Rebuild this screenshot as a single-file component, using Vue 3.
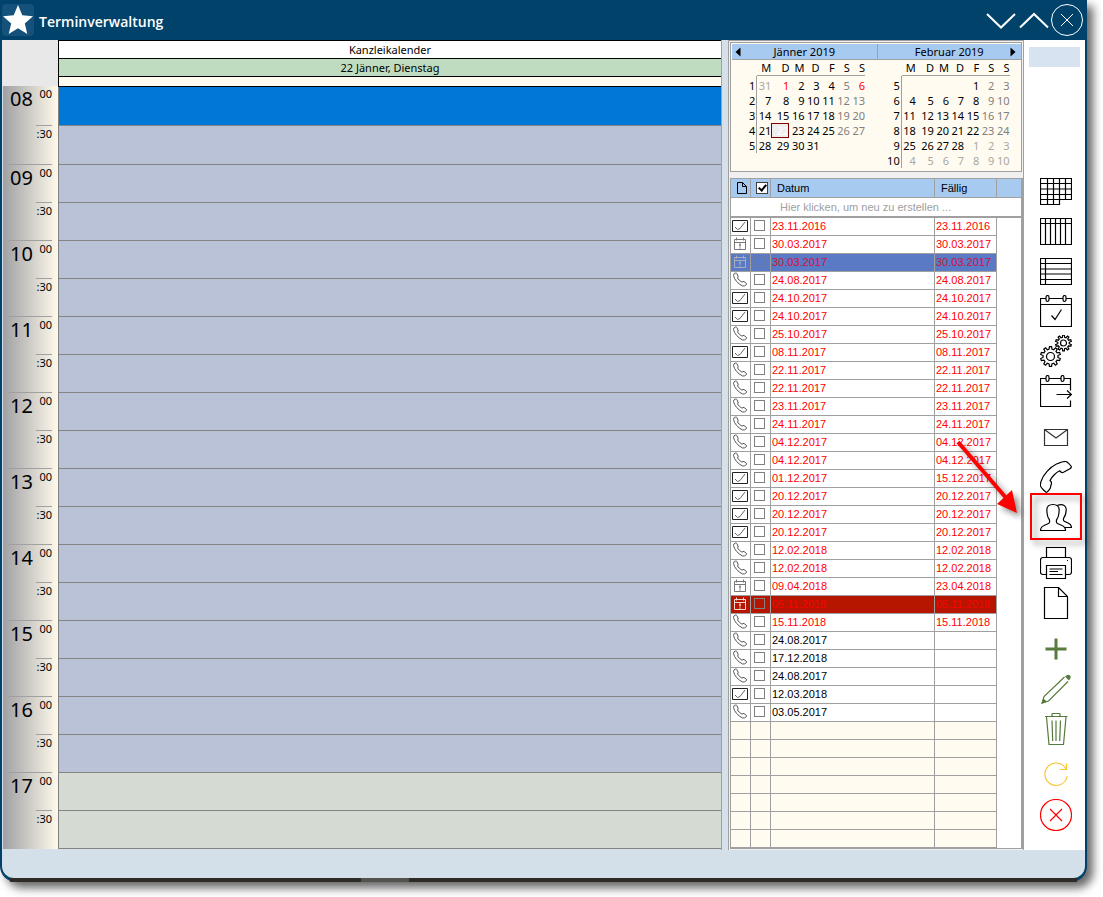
<script setup>
import { ref } from 'vue'

const hours = ['08', '09', '10', '11', '12', '13', '14', '15', '16', '17']

const selectedSlot = ref('08:00')
const slots = hours.flatMap((h) => [`${h}:00`, `${h}:30`])

const weekdays = ['M', 'D', 'M', 'D', 'F', 'S', 'S']

// n: normal, o: outside the month, r: holiday, s: selected; weekends are grey by column
const months = [
  {
    name: 'Jänner 2019',
    weeks: [
      { no: 1, days: ['31o', '1r', '2', '3', '4', '5', '6r'] },
      { no: 2, days: ['7', '8', '9', '10', '11', '12', '13'] },
      { no: 3, days: ['14', '15', '16', '17', '18', '19', '20'] },
      { no: 4, days: ['21', '22s', '23', '24', '25', '26', '27'] },
      { no: 5, days: ['28', '29', '30', '31', '', '', ''] }
    ]
  },
  {
    name: 'Februar 2019',
    weeks: [
      { no: 5, days: ['', '', '', '', '1', '2', '3'] },
      { no: 6, days: ['4', '5', '6', '7', '8', '9', '10'] },
      { no: 7, days: ['11', '12', '13', '14', '15', '16', '17'] },
      { no: 8, days: ['18', '19', '20', '21', '22', '23', '24'] },
      { no: 9, days: ['25', '26', '27', '28', '1o', '2o', '3o'] },
      { no: 10, days: ['4o', '5o', '6o', '7o', '8o', '9o', '10o'] }
    ]
  }
]

function dayClass(day, index) {
  return {
    weekend: index > 4,
    outside: day.endsWith('o'),
    holiday: day.endsWith('r'),
    today: day.endsWith('s')
  }
}

const task = (kind, date, due = '', state = '') => ({ kind, date, due, state, done: false })
const tasks = ref([
  task('check', '23.11.2016', '23.11.2016'),
  task('date', '30.03.2017', '30.03.2017'),
  task('date', '30.03.2017', '30.03.2017', 'active'),
  task('phone', '24.08.2017', '24.08.2017'),
  task('check', '24.10.2017', '24.10.2017'),
  task('check', '24.10.2017', '24.10.2017'),
  task('phone', '25.10.2017', '25.10.2017'),
  task('check', '08.11.2017', '08.11.2017'),
  task('phone', '22.11.2017', '22.11.2017'),
  task('phone', '22.11.2017', '22.11.2017'),
  task('phone', '23.11.2017', '23.11.2017'),
  task('phone', '24.11.2017', '24.11.2017'),
  task('phone', '04.12.2017', '04.12.2017'),
  task('phone', '04.12.2017', '04.12.2017'),
  task('check', '01.12.2017', '15.12.2017'),
  task('check', '20.12.2017', '20.12.2017'),
  task('check', '20.12.2017', '20.12.2017'),
  task('check', '20.12.2017', '20.12.2017'),
  task('phone', '12.02.2018', '12.02.2018'),
  task('phone', '12.02.2018', '12.02.2018'),
  task('date', '09.04.2018', '23.04.2018'),
  task('date', '05.11.2018', '05.11.2018', 'urgent'),
  task('phone', '15.11.2018', '15.11.2018'),
  task('phone', '24.08.2017'),
  task('phone', '17.12.2018'),
  task('phone', '24.08.2017'),
  task('check', '12.03.2018'),
  task('phone', '03.05.2017')
])
const allDone = ref(true)

function gear(cx, cy, outer, inner, teeth, hole) {
  const step = (Math.PI * 2) / teeth
  const pt = (r, a) => `${(cx + r * Math.cos(a)).toFixed(2)} ${(cy + r * Math.sin(a)).toFixed(2)}`
  let d = ''
  for (let i = 0; i < teeth; i++) {
    const a = i * step - Math.PI / 2
    d += `${i ? 'L' : 'M'}${pt(inner, a - step * 0.3)}L${pt(outer, a - step * 0.17)}L${pt(outer, a + step * 0.17)}L${pt(inner, a + step * 0.3)}`
  }
  return `${d}ZM${cx - hole} ${cy}a${hole} ${hole} 0 1 0 ${hole * 2} 0a${hole} ${hole} 0 1 0 ${-hole * 2} 0`
}

const rings = (a, b) =>
  [a, b].map((x) => `M${x - 1.5} 2.5a1.5 2 0 0 1 3 0v2a1.5 2 0 0 1 -3 0z`).join('')

const toolGroups = [
  [
    { label: 'Monatsansicht', d: 'M.5 3.5H31.5V24.5H19.5V29.5H.5ZM7.5 3.5V29.5M13.5 3.5V29.5M19.5 3.5V24.5M25.5 3.5V24.5M.5 8.5H31.5M.5 14H31.5M.5 19.5H31.5M.5 24.5H19.5' },
    { label: 'Wochenansicht', d: 'M.5 3.5H31.5V29.5H.5ZM.5 8.5H31.5M5.5 3.5V29.5M10.5 3.5V29.5M15.5 3.5V29.5M20.5 3.5V29.5M25.5 3.5V29.5' },
    { label: 'Tagesansicht', d: 'M.5 3.5H31.5V29.5H.5ZM5.5 3.5V29.5M.5 8.5H31.5M.5 14H31.5M.5 19H31.5M.5 24.5H31.5' },
    { label: 'Heute', d: 'M6 3.5H.5V31.5H31.5V3.5H26M9 3.5H23M.5 9.5H31.5M11.5 20.5L15 24.5L21.5 14.5' + rings(7.5, 24.5) },
    { label: 'Einstellungen', d: gear(10.5, 21.5, 10, 7.5, 10, 4) + gear(23.5, 8, 8, 5.8, 10, 3) },
    { label: 'Termin verschieben', d: 'M6 3.5H.5V31.5H30.5V25.5M9 3.5H21M24 3.5H30.5V15.5M.5 9.5H30.5M16.5 19.5H31M27 15.5L31.5 19.5L27 23.5' + rings(7.5, 22.5) }
  ],
  [
    { label: 'E-Mail', d: 'M4.5 8.5H27.5V24.5H4.5ZM4.5 8.5L16 17L27.5 8.5', soft: true },
    { label: 'Telefonat', d: 'M26 .5C27.5 1 30.5 4 31.3 5.5C31.5 6.5 31 7.3 29.5 8L23.5 11.3C22 12 21 11.5 19.8 9.8C16 11.5 11.5 16 10 19.5C11.5 20.5 11.8 21.5 11.3 23L10.3 27C9.8 28.5 7.5 31 6.5 31.3C5.5 31.5 1.5 27 .7 25.5C.3 24.5 .5 22 1 20.5C3 14 10 6 16.5 3C19 2 24 .3 26 .5Z' },
    { label: 'Personen', marked: true, d: 'M.5 29.5C.5 26.5 1.5 25.5 4 24.5L8.5 22.5C9.8 21.8 9.8 20 9.3 18.5C7.5 16.5 7 13.5 6.8 9C6.8 5 9 3.5 13 3.5C17 3.5 19.2 5 19.2 9C19 13.5 18.5 16.5 16.7 18.5C16.2 20 16.2 21.8 17.5 22.5L22 24.5C24.5 25.5 25.5 26.5 25.5 29.5ZM17.5 4.3C22.5 2.3 26.5 4.5 26.2 9C26 12.5 25.3 15 23.8 16.8C23.3 18 23.3 19.5 24.3 20.3L28.5 22.3C31 23.5 31.5 24.5 31.5 26.5H25' }
  ],
  [
    { label: 'Drucken', d: 'M6.5 10.5V.5H25.5V10.5M6.5 27.5H3Q.5 27.5 .5 25V13Q.5 10.5 3 10.5H29Q31.5 10.5 31.5 13V25Q31.5 27.5 29 27.5H25.5M6.5 18.5H25.5V31.5H6.5ZM9.5 22H22.5M9.5 24.5H18M9.5 27.5H22.5M27 13.5h1' },
    { label: 'Dokument', d: 'M4.5 .5H18.5L27.5 9.5V31.5H4.5ZM18.5 .5V9.5H27.5' }
  ],
  [
    { label: 'Neu', tone: 'green', d: '', fill: 'M14.5 5.5H17.5V14.5H26.5V17.5H17.5V26.5H14.5V17.5H5.5V14.5H14.5Z' },
    { label: 'Bearbeiten', tone: 'green', d: 'M24.5 4L4 23.5L2 30L8.5 28L28 8.5', fill: 'M25 3.5Q28 .5 30 2.5Q31.8 4.5 28.8 7.5ZM3.5 25.5L1.5 30.7L7 28.7Z' },
    { label: 'Löschen', tone: 'green', d: 'M5 3.5H27.5M12 3V1.5Q12 .5 13 .5H19Q20 .5 20 1.5V3M6.5 4L9 31.5H23.5L26 4M12 7.5L12.7 28M16 7.5V28M20.5 7.5L19.7 28' }
  ],
  [
    { label: 'Aktualisieren', tone: 'yellow', d: 'M26.5 4.5V10.5H20M26.3 10.5A11.2 11.2 0 1 0 27.2 17' },
    { label: 'Schließen', tone: 'red', d: 'M.5 16a15.5 15.5 0 1 0 31 0a15.5 15.5 0 1 0 -31 0M10 10L22 22M22 10L10 22' }
  ]
]
</script>

<template>
  <div class="window">
    <header class="titlebar">
      <span class="logo">
        <svg viewBox="0 0 32 32" width="32" height="32" aria-hidden="true">
          <path fill="#fff" d="M16 1L20.3 11.3L31 12.3L22.8 19.6L25.3 30L16 24.2L6.700 30L9.200 19.600L1 12.300L11.700 11.300Z" />
        </svg>
      </span>
      <h1>Terminverwaltung</h1>
      <button class="win-btn" type="button" aria-label="Minimieren">
        <svg viewBox="0 0 32 32" width="32" height="32"><path d="M2 10L16 23.500L30 10" /></svg>
      </button>
      <button class="win-btn" type="button" aria-label="Maximieren">
        <svg viewBox="0 0 32 32" width="32" height="32"><path d="M2 23.500L16 10L30 23.500" /></svg>
      </button>
      <button class="win-btn thin" type="button" aria-label="Fenster schließen">
        <svg viewBox="0 0 32 32" width="32" height="32"><path d="M.5 16a15.500 15.500 0 1 0 31 0a15.500 15.500 0 1 0 -31 0M10 10L22 22M22 10L10 22" /></svg>
      </button>
    </header>

    <main class="body">
      <section class="planner">
        <div class="ruler">
          <div class="ruler-head"></div>
          <div class="ruler-hours">
            <div v-for="(h, i) in hours" :key="h" class="hour" :class="{ first: i === 0 }">
              <span class="hour-no">{{ h }}</span>
              <div class="minutes">
                <span class="full">00</span>
                <span class="half">:30</span>
              </div>
            </div>
          </div>
        </div>
        <div class="day">
          <div class="day-title">Kanzleikalender</div>
          <div class="day-date">22 Jänner, Dienstag</div>
          <div class="day-allday"></div>
          <div class="slots">
            <button
              v-for="(s, i) in slots"
              :key="s"
              type="button"
              class="slot"
              :class="{ first: i < 2, selected: s === selectedSlot, off: i > 17 }"
              :aria-label="s"
              @click="selectedSlot = s"
            ></button>
          </div>
        </div>
      </section>

      <aside class="side">
        <div class="months">
          <div v-for="(m, mi) in months" :key="m.name" class="month">
            <div class="month-head">
              <button v-if="mi === 0" type="button" class="nav prev" aria-label="Voriger Monat">
                <svg viewBox="0 0 6 10" width="6" height="10"><path d="M5.500 .5V9.500L.5 5Z" /></svg>
              </button>
              <span>{{ m.name }}</span>
              <button v-if="mi === 1" type="button" class="nav next" aria-label="Nächster Monat">
                <svg viewBox="0 0 6 10" width="6" height="10"><path d="M.5 .5V9.500L5.500 5Z" /></svg>
              </button>
            </div>
            <table class="month-grid">
              <colgroup>
                <col class="c-week" /><col class="c-mon" /><col class="c-tue" />
                <col v-for="n in 5" :key="n" class="c-day" />
              </colgroup>
              <thead>
                <tr>
                  <td></td>
                  <th v-for="(w, i) in weekdays" :key="i" scope="col">{{ w }}</th>
                </tr>
              </thead>
              <tbody>
                <tr v-for="w in m.weeks" :key="w.no">
                  <th scope="row">{{ w.no }}</th>
                  <td v-for="(d, i) in w.days" :key="i" :class="dayClass(d, i)">{{ parseInt(d) || '' }}</td>
                </tr>
              </tbody>
            </table>
          </div>
        </div>

        <div class="tasks">
          <table class="task-grid">
            <colgroup>
              <col class="t-icon" /><col class="t-icon" /><col /><col class="t-due" /><col class="t-rest" />
            </colgroup>
            <thead>
              <tr class="task-head">
                <th scope="col" aria-label="Art">
                  <svg viewBox="0 0 11 13" width="11" height="13"><path fill="none" stroke="#000" d="M1.500 .5H6.500L10.500 4.500V11.500H1.500ZM6.500 .5V4.500H10.500" /></svg>
                </th>
                <th scope="col"><input v-model="allDone" type="checkbox" class="head-box" aria-label="Alle erledigt" /></th>
                <th scope="col" class="text">Datum</th>
                <th scope="col" class="text">Fällig</th>
                <th scope="col" aria-label="Leer"></th>
              </tr>
              <tr class="task-new">
                <td colspan="5"><button type="button">Hier klicken, um neu zu erstellen ...</button></td>
              </tr>
            </thead>
            <tbody>
              <tr v-for="(t, i) in tasks" :key="i" :class="[t.state, { overdue: t.due }]">
                <td class="icon">
                  <svg v-if="t.kind === 'check'" viewBox="0 0 17 15" width="17" height="15">
                    <path d="M.5 1.500H15.500V12.500H.5Z" stroke="#222" />
                    <path d="M3 8L5.500 10.500L8 9.500L13 3" stroke="#666" />
                  </svg>
                  <svg v-else-if="t.kind === 'date'" class="date-icon" viewBox="0 0 17 15" width="17" height="15">
                    <path d="M2.500 2.500H13.500V12.500H2.500ZM2.500 5.500H13.500M4.500 .5V3.500M11.500 .5V3.500" />
                    <path d="M8 6.500V9.500M8 10.500V11.500" stroke-width="1.500" />
                  </svg>
                  <svg v-else viewBox="0 0 17 17" width="17" height="17">
                    <path stroke="#555" d="M3.500 1Q1.500 1.500 1.500 3.500Q3 10 10.500 14Q12.500 14.500 14.500 12.500Q15 11.500 14 11L12 9.500Q11 9.200 10 10.200Q7 8.500 5.500 6Q6.500 5 6 4L5 1.700Q4.500 1 3.500 1Z" />
                  </svg>
                </td>
                <td class="pick"><input v-model="t.done" type="checkbox" :aria-label="`Erledigt ${t.date}`" /></td>
                <td class="text">{{ t.date }}</td>
                <td class="text">{{ t.due }}</td>
                <td class="rest"></td>
              </tr>
              <tr v-for="n in 7" :key="`e${n}`" class="empty">
                <td></td><td></td><td></td><td></td><td class="rest"></td>
              </tr>
            </tbody>
          </table>
        </div>
      </aside>

      <nav class="toolbar" aria-label="Werkzeuge">
        <div class="toolbar-field"></div>
        <div v-for="(g, gi) in toolGroups" :key="gi" class="tool-group">
          <button v-for="t in g" :key="t.label" type="button" class="tool" :class="[t.tone, { soft: t.soft }]" :aria-label="t.label">
            <svg viewBox="0 0 32 32" width="32" height="32">
              <path class="line" :d="t.d" />
              <path v-if="t.fill" class="solid" :d="t.fill" />
            </svg>
            <template v-if="t.marked">
              <span class="marker"></span>
              <svg class="pointer" viewBox="0 0 80 90" width="80" height="90">
                <path d="M9 7L58 64" stroke="#f00" stroke-width="4" />
                <path d="M68 78L48 69L63 55Z" fill="#f00" />
              </svg>
            </template>
          </button>
        </div>
      </nav>
    </main>

    <footer class="statusbar"></footer>
    <div class="edge"><span></span></div>
  </div>
</template>

<style>
body {
  background: #fff;
}
#app {
  padding-right: 16px;
  overflow: hidden;
  padding-bottom: 16px;
}
</style>

<style scoped>
.window {
  --line: #a0a0a0;
  background: #004269;
  border: 0 solid #004269;
  border-width: 0 2px;
  border-radius: 0 0 16px 16px;
  box-shadow: 6px 6px 10px rgba(0, 0, 0, 0.6);
  font: 11px/15px "Noto Sans", "DejaVu Sans Condensed", sans-serif;
  color: #000;
}
button {
  margin: 0;
  padding: 0;
  border: 0;
  background: none;
  font: inherit;
  color: inherit;
}
svg {
  display: block;
}
table {
  border-collapse: separate;
  border-spacing: 0;
  table-layout: fixed;
}
th,
td {
  padding: 0;
  font-weight: normal;
  box-sizing: border-box;
}

/* title bar */
.titlebar {
  display: flex;
  align-items: center;
  height: 40px;
}
.logo {
  background: #14527c;
  border-radius: 4px;
}
h1 {
  flex: 1;
  margin: 4px 0 0 5px;
  font: 600 14px/20px "Open Sans", sans-serif;
  color: #fff;
}
.win-btn {
  width: 33px;
}
.win-btn path {
  fill: none;
  stroke: #fff;
  stroke-width: 2;
}
.win-btn.thin {
  width: 34px;
}
.win-btn.thin path {
  stroke-width: 1;
}

/* day planner */
.body {
  display: flex;
  background: #d5e0e9;
}
.planner {
  flex: 1;
  display: flex;
}
.ruler {
  width: 56px;
}
.ruler-head {
  height: 46px;
  background: #e8e8e8;
}
.ruler-hours {
  padding: 0 6px 0 5px;
  border-left: 1px solid #d5e0e9;
  background: linear-gradient(90deg, #a0a0a4, #fffaeb);
}
.hour {
  display: flex;
  justify-content: space-between;
  box-sizing: border-box;
  height: 76px;
  border-bottom: 1px solid var(--line);
}
.hour.first {
  height: 79px;
}
.hour:last-child {
  border-bottom: 0;
}
.hour-no {
  padding: 1px 0 0 2px;
  font-size: 20px;
  line-height: 24px;
}
.minutes {
  display: flex;
  flex-direction: column;
  text-align: right;
}
.full {
  height: 37px;
}
.first .full {
  height: 39px;
}
.half {
  border-top: 1px solid var(--line);
}
.day {
  flex: 1;
  border-right: 1px solid var(--line);
}
.day-title,
.day-date,
.day-allday {
  box-sizing: border-box;
  height: 18px;
  border: 1px solid #000;
  border-width: 1px 0 0 1px;
  text-align: center;
  line-height: 17px;
  background: #fff;
}
.day-date {
  background: #c0dcc0;
}
.day-allday {
  height: 11px;
  border-bottom-width: 1px;
  background: #fffbf0;
}
.slots {
  display: flex;
  flex-direction: column;
  border-left: 1px solid #808080;
}
.slot {
  box-sizing: border-box;
  height: 38px;
  border-bottom: 1px solid #848484;
  background: #b9c2d7;
}
.slot.first {
  height: 39px;
}
.slot.off {
  background: #d5dbd2;
}
.slot.selected {
  background: #0078d7;
}

/* side panel */
.side {
  box-sizing: border-box;
  width: 296px;
  margin-left: 6px;
  padding: 1px;
  border: 1px solid var(--line);
  border-bottom: 0;
  background: #f0f0f0;
}
.months {
  display: flex;
  box-sizing: border-box;
  height: 130px;
  padding: 1px 0 0 1px;
  border: 1px solid var(--line);
  background: #fffbf0;
}
.month {
  flex: 1;
}
.month-head {
  display: flex;
  align-items: center;
  justify-content: center;
  position: relative;
  box-sizing: border-box;
  height: 16px;
  border-bottom: 1px solid var(--line);
  background: #a6caf0;
}
.month + .month .month-head {
  border-left: 1px solid var(--line);
}
.nav {
  position: absolute;
  top: 3px;
}
.prev {
  left: 3px;
}
.next {
  right: 5px;
}
.month-grid {
  width: 133px;
}
.c-week {
  width: 25px;
}
.c-mon {
  width: 14px;
}
.c-tue {
  width: 18px;
}
.c-day {
  width: 15px;
}
.month-grid th,
.month-grid td {
  text-align: right;
  height: 15px;
  line-height: 15px;
  white-space: nowrap;
}
.month-grid thead th {
  height: 16px;
  border-bottom: 1px solid var(--line);
}
.month-grid tbody tr:first-child > * {
  height: 17px;
  padding-top: 2px;
}
.month-grid tbody th {
  padding-right: 1px;
  border-right: 1px solid var(--line);
}
.month-grid .weekend {
  color: #808080;
}
.month-grid .outside {
  color: #a8a8a8;
}
.month-grid .holiday {
  color: #f00;
}
.month-grid .today {
  background: #efefef;
  color: #fff;
  outline: 1px solid #800000;
  outline-offset: -1px;
}

/* task list */
.tasks {
  margin-top: 6px;
  border: 1px solid var(--line);
  border-right-width: 2px;
  margin-right: -1px;
  background: #fff;
}
.task-grid {
  width: 100%;
  font: 11px/17px "Liberation Sans", Arial, sans-serif;
}
.t-icon {
  width: 20px;
}
.t-due {
  width: 62px;
}
.t-rest {
  width: 24px;
}
.task-head th {
  height: 19px;
  border: 1px solid var(--line);
  border-width: 0 1px 1px 0;
  background: #a6caf0;
  text-align: left;
}
.task-head th:last-child {
  border-right: 0;
}
.task-head .text {
  padding-left: 6px;
}
.task-head svg {
  margin: 0 3px 0 auto;
}
.task-new td {
  height: 20px;
  border-bottom: 2px solid var(--line);
}
.task-new button {
  display: block;
  width: 100%;
  padding-left: 49px;
  color: #a0a0a0;
  text-align: left;
}
tbody .text {
  padding-left: 1px;
}
.task-grid tbody td {
  height: 18px;
  border: 1px solid var(--line);
  border-width: 0 1px 1px 0;
}
.task-grid tbody .rest {
  border: 0;
  background: #fff;
}
.icon svg {
  margin: 0 0 0 1px;
  fill: none;
  stroke-width: 1;
}
.date-icon {
  stroke: #777;
}
input[type='checkbox'] {
  appearance: none;
  display: block;
  box-sizing: border-box;
  width: 11px;
  height: 11px;
  margin: 0 auto 0 3px;
  border: 1px solid #808080;
  background: transparent;
}
.task-grid tbody .pick {
  padding-bottom: 2px;
}
.pick input:checked {
  background: #808080;
}
input.head-box[type='checkbox'] {
  width: 12px;
  height: 12px;
  margin-left: 5px;
  border: 1px solid #000;
  outline: 1px solid #404040;
  outline-offset: -1px;
  background: #fff;
  position: relative;
}
.head-box:checked::after {
  content: '';
  position: absolute;
  left: 3px;
  top: 0;
  width: 3px;
  height: 6px;
  border: 2px solid #000;
  border-width: 0 2px 2px 0;
  transform: rotate(40deg);
}
.overdue {
  color: #f00;
}
.task-grid .active td {
  background: #5b7ac5;
}
.active .text {
  color: #d2103c;
}
.active .date-icon {
  stroke: #a8aebd;
}
.active input[type='checkbox'] {
  border-color: #6a7aa8;
}
.task-grid .urgent td {
  background: #b61500;
}
.urgent .date-icon {
  stroke: #f0d8d0;
}
.task-grid .active .rest,
.task-grid .urgent .rest {
  background: #fff;
}
.empty td {
  background: #fffbf0;
}

/* tool bar */
.toolbar {
  box-sizing: border-box;
  width: 61px;
  padding: 7px 0 0 3px;
  background: #fff;
}
.toolbar-field {
  width: 51px;
  height: 20px;
  margin: 0 0 104px 2px;
  background: #d7e3f1;
}
.tool-group {
  margin-bottom: 6px;
}
.tool {
  display: flex;
  align-items: center;
  justify-content: center;
  position: relative;
  width: 100%;
  height: 40px;
  color: #000;
}
.line {
  fill: none;
  stroke: currentColor;
  stroke-width: 1.2;
}
.solid {
  fill: currentColor;
}
.soft {
  color: #333;
}
.green {
  color: #567b3c;
}
.yellow {
  color: #fbc52f;
}
.red {
  color: #f00;
}
.marker {
  position: absolute;
  top: -4px;
  right: 3px;
  bottom: -3px;
  left: 3px;
  border: 2px solid #f00;
  filter: drop-shadow(4px 4px 3px rgba(0, 0, 0, 0.45));
}
.pointer {
  position: absolute;
  top: -62px;
  left: -78px;
  fill: none;
  filter: drop-shadow(4px 4px 3px rgba(0, 0, 0, 0.45));
}

/* bottom */
.statusbar {
  height: 28px;
  border-radius: 0 0 12px 12px;
  background: #d4e0e9;
}
.edge {
  display: flex;
  height: 4px;
  margin: 0 8px;
  padding-left: 351px;
  background: #2e2a25;
}
.edge span {
  width: 48px;
  background: #54524e;
}
</style>
